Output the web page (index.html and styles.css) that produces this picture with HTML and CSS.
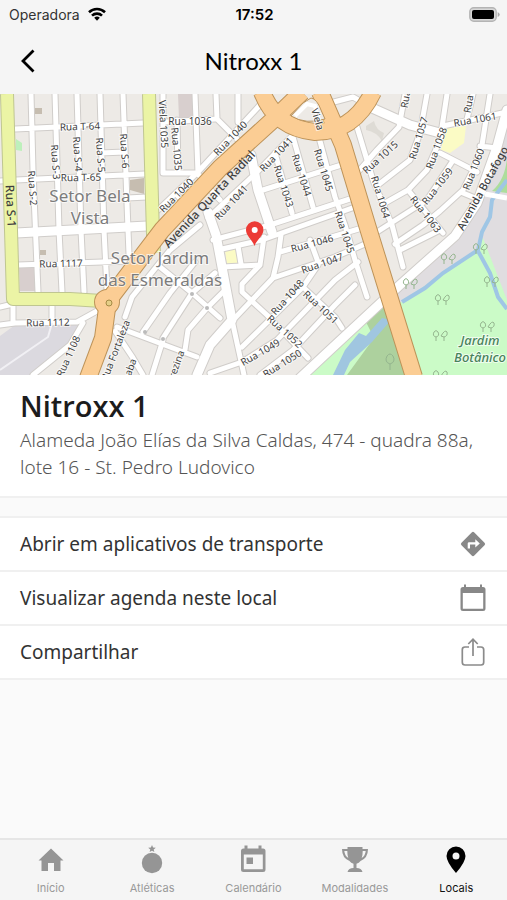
FILE: index.html
```html
<!DOCTYPE html>
<html lang="pt-BR">
<head>
<meta charset="utf-8">
<meta name="viewport" content="width=device-width, initial-scale=1">
<title>Nitroxx 1</title>
<link rel="stylesheet" href="styles.css">
</head>
<body>
<div class="app">
  <header class="top">
    <div class="status">
      <span class="carrier">Operadora
        <svg class="wifi" viewBox="0 0 18 14" aria-hidden="true"><g fill="none" stroke="#000" stroke-width="2.6"><path d="M1 5.2a11.5 11.5 0 0 1 16 0"/><path d="M4 8.6a7.2 7.2 0 0 1 10 0"/></g><path d="M6.2 10.8a4 4 0 0 1 5.6 0L9 13.8z"/></svg>
      </span>
      <span class="clock">17:52</span>
      <span class="power"><svg class="battery" viewBox="0 0 31 15" aria-hidden="true"><rect x=".8" y=".8" width="26.4" height="13.4" rx="4" fill="#d8d8d8" stroke="#b4b4b4" stroke-width="1.4"/><rect x="3" y="3" width="22" height="9" rx="2"/><path d="M28.7 5v5q2-1 2-2.5T28.7 5z" fill="#aaa"/></svg></span>
    </div>
    <nav class="navbar">
      <button class="back" type="button" aria-label="Voltar"><svg viewBox="0 0 16 24" aria-hidden="true"><path d="M13.5 1.500L3 12l10.500 10.500" fill="none" stroke="#000" stroke-width="2.800"/></svg></button>
      <div class="title">Nitroxx 1</div>
    </nav>
  </header>

  <main class="content">
    <svg class="map" viewBox="0 94 507 281" preserveAspectRatio="xMidYMid slice" role="img" aria-label="Mapa">
      <defs>
        <g id="streets">
          <path d="M31 94L33 170 38 292M55 94L59 230 62 292M77 94L81 230 84 292M100 94L104 230 107 290M123 94L128 230 130 278M15 129L143 123M0 181L16 180 145 174M100 153L125 152M127 198L147 197M18 265L130 261"/>
          <path d="M163 94V173H197M165 122L215 119M177 120L178 173M195 94L198 173M216 94L217 119 243 145M238 94V122M260 105L197 173 158 210M197 173L208 185M177 195L188 207M208 187L220 200"/>
          <path d="M208 218L257 172 293 135M275 153L292 213M293 137L313 207M317 130L335 197 345 225 355 260 367 297M263 190L335 167 345 164M213 240L270 225 353 198M222 249L262 240 355 207"/>
          <path d="M222 267L260 265M238 246L241 264M264 237L260 265 242 284V292L267 315 308 358M281 235L278 257 273 278M235 318L273 278 335 257 372 241M280 252L335 236 362 228M310 240L318 262M242 347L303 287 318 265M303 287L335 317 342 328M210 373L242 362 277 340 335 280 358 262M260 375L293 350 335 305 355 285M232 320L244 375"/>
          <path d="M392 225L403 267M400 250L440 230M405 94L399 127 377 150 357 173M427 94L420 133 410 160 378 185M447 94L440 140 427 170 408 190 385 203M443 126L507 112M473 94L467 119M490 94L482 145 473 170 463 190 440 211 423 225 395 244M452 162L427 200 377 232M440 153L477 172M357 127L373 180 392 225M408 190L443 233M480 146L497 148M463 193L480 200M372 108L353 97 330 103"/>
          <path d="M0 307L13 304V323M0 325L15 323 77 322 97 311M52 305V323M83 323L70 345 33 375M125 317L132 297 170 250 200 225M117 327L170 347 197 357M143 332L170 293 195 262M163 338L192 293 215 273M185 350L188 330 207 308 225 290M160 267L192 293 220 318M115 331L133 358 143 375M163 340L152 375"/>
        </g>
        <g id="mainroads">
          <path d="M16 233L147 226M251 155L258 190 272 232M208 212L216 235 232 320 210 345 197 375M372 108L410 125 440 133M300 378L330 350 400 285 455 236 477 203 497 147 507 110"/>
        </g>
        <g id="trees"><path d="M0 9V5M0 5Q-4 4-2 0Q0-3 2 0Q4 4 0 5M8 9V5M8 5L5 4Q9-3 11 0Q12 4 8 5"/></g>
      </defs>
      <rect class="land" y="94" width="507" height="281"/>
      <path fill="#dbd9df" d="M0 336L15 325 80 325 70 344 30 375H0z"/>
      <path fill="#e0dde0" d="M395 290L455 236 477 203 507 130V375H380z"/>
      <path fill="#cbfbc7" d="M300 375L370 308 402 302 443 273 477 252 483 238 507 300V375z"/>
      <path fill="#addd9c" d="M507 158Q505 180 492 191L507 193z"/>
      <path fill="#add19e" d="M364 318L386 298 392 320 413 375H347L374 338z"/>
      <path fill="#a0c6e0" d="M333 375L345 350 359 333 366 336 382 318 391 320 372 342 350 362 344 375z"/>
      <path fill="#fbfbc5" d="M445 128L466 126 464 143 450 153 441 150zM225 250L236 248 238 264 227 266z"/>
      <path fill="#d8cfce" d="M19 267L35 267V291H20zM178 94H194L193 118 179 119z"/>
      <path fill="#c6bdb0" d="M35 108h7v6h-7zM130 180L144 178V194L130 190zM40 250h6v5h-6z"/>
      <path fill="#bdf0bb" d="M16 139L22 143V151L16 150z"/>
      <path fill="#dedbd5" d="M366 126L374 121Q376 130 384 133L382 141Q377 132 366 130z"/>
      <path class="river" d="M507 180L492 200 490 217 482 232 478 250 443 273 425 288 402 302M478 251L490 273 498 297 507 309"/>
      <use href="#streets" class="case"/>
      <use href="#mainroads" class="case wide"/>
      <use href="#streets" class="road"/>
      <use href="#mainroads" class="road wide"/>
      <path d="M52 323L48 337 0 370" stroke="#f1f0f4" stroke-width="2" fill="none"/>
      <path d="M485 194L507 198" stroke="#fff" stroke-width="5"/>
      <g class="yellow-case"><path d="M7 94L11 230 13 299 70 299 102 301M149 94L153 235 154 253"/></g>
      <g class="yellow"><path d="M7 94L11 230 13 299 70 299 102 301M149 94L153 235 154 253"/></g>
      <g class="orange-case"><path d="M302 92L275 118 220 168 162 230 108 301 103 338 88 378M262 92Q276 128 315 132 354 132 373 92M320 92L343 145 368 228 414 377"/><circle cx="107" cy="302" r="4"/></g>
      <g class="orange"><path d="M302 92L275 118 220 168 162 230 108 301 103 338 88 378M262 92Q276 128 315 132 354 132 373 92M320 92L343 145 368 228 414 377"/><circle cx="107" cy="302" r="4"/></g>
      <path fill="#edeae6" stroke="#bd9359" d="M291 116L303 103 311 98Q317 99 321 110L325 119Q306 125 291 116z"/>
      <path d="M295 116L307 104 315 106 319 120" fill="none" stroke="#fff" stroke-width="4"/>
      <circle cx="109" cy="303" r="3" fill="#e5ce87" stroke="#a58a45"/>
      <g fill="#bbb"><circle cx="145" cy="332" r="2"/><circle cx="163" cy="339" r="2"/><circle cx="192" cy="294" r="2"/><circle cx="207" cy="308" r="2"/></g>
      <g class="trees"><use href="#trees" x="444" y="255"/><use href="#trees" x="406" y="280"/><use href="#trees" x="438" y="296"/><use href="#trees" x="487" y="278"/><use href="#trees" x="476" y="245"/><use href="#trees" x="483" y="323"/><use href="#trees" x="436" y="332"/><use href="#trees" x="436" y="372"/><path d="M390 370V364M390 364Q384 362 387 356Q390 352 393 356Q396 362 390 364"/></g>
      <g class="labels area"><text x="90" y="202">Setor Bela</text><text x="90" y="224">Vista</text><text x="160" y="264">Setor Jardim</text><text x="160" y="286">das Esmeraldas</text></g>
      <g class="labels">
        <text x="80" y="130" transform="rotate(-2 80 127)">Rua T-64</text><text x="81" y="181" transform="rotate(-1 81 177)">Rua T-65</text>
        <text transform="translate(33 188) rotate(86)">Rua S-2</text><text transform="translate(56 162) rotate(86)">Rua S-3</text><text transform="translate(78 154) rotate(86)">Rua S-4</text><text transform="translate(101 155) rotate(86)">Rua S-5</text><text transform="translate(125 151) rotate(86)">Rua S-6</text>
        <text transform="translate(164 124) rotate(87)">Viela 1035</text><text transform="translate(177 149) rotate(85)">Rua 1035</text><text x="190" y="125">Rua 1036</text>
        <text transform="translate(230 138) rotate(-46)">Rua 1040</text><text transform="translate(176 195) rotate(-45)">Rua 1040</text><text transform="translate(231 202) rotate(-47)">Rua 1041</text><text transform="translate(276 154) rotate(-46)">Rua 1041</text>
        <text transform="translate(284 186) rotate(72)">Rua 1043</text><text transform="translate(302 175) rotate(72)">Rua 1044</text><text transform="translate(324 170) rotate(73)">Rua 1045</text><text transform="translate(345 232) rotate(72)">Rua 1045</text>
        <text transform="translate(318 119) rotate(73)">Viela</text><text transform="translate(312 243) rotate(-15)">Rua 1046</text><text transform="translate(322 263) rotate(-19)">Rua 1047</text>
        <text transform="translate(287 297) rotate(-48)">Rua 1048</text><text transform="translate(260 352) rotate(-30)">Rua 1049</text><text transform="translate(282 363) rotate(-32)">Rua 1050</text><text transform="translate(321 307) rotate(43)">Rua 1051</text><text transform="translate(285 331) rotate(42)">Rua 1052</text>
        <text transform="translate(380 157) rotate(-42)">Rua 1015</text><text transform="translate(405 99) rotate(-80)">Rua</text><text transform="translate(468 104) rotate(-80)">Rua</text><text transform="translate(418 138) rotate(-73)">Rua 1057</text><text transform="translate(436 148) rotate(-70)">Rua 1058</text><text transform="translate(437 186) rotate(-52)">Rua 1059</text><text transform="translate(473 169) rotate(-69)">Rua 1060</text><text transform="translate(475 119) rotate(-10)">Rua 1061</text><text transform="translate(426 214) rotate(52)">Rua 1063</text><text transform="translate(381 197) rotate(73)">Rua 1064</text>
        <text x="61" y="267" transform="rotate(-1 61 263)">Rua 1117</text><text x="48" y="326" transform="rotate(-1 48 323)">Rua 1112</text><text transform="translate(68 356) rotate(-66)">Rua 1108</text><text transform="translate(115 350) rotate(-69)">Rua Fortaleza</text><text transform="translate(130 367) rotate(-70)">aba</text><text transform="translate(176 364) rotate(-70)">rezina</text>
      </g>
      <g class="labels major"><text transform="translate(11 206) rotate(87)">Rua S-1</text><text transform="translate(209 199) rotate(-47)">Avenida Quarta Radial</text><text class="avenue" transform="translate(482 188) rotate(-61)">Avenida Botafogo</text></g>
      <g class="labels park"><text x="480" y="345">Jardim</text><text x="480" y="362">Botânico</text></g>
      <path d="M254.500 246C252 239 246 236 246 230A8.700 8.700 0 0 1 263.400 230C263.400 236 257 239 254.500 246z" fill="#ec3b35"/><circle cx="254.700" cy="230" r="3" fill="#fff"/>
    </svg>

    <section class="place">
      <h1>Nitroxx 1</h1>
      <p>Alameda João Elías da Silva Caldas, 474 - quadra 88a, lote 16 - St. Pedro Ludovico</p>
    </section>

    <section class="actions">
      <button type="button"><span>Abrir em aplicativos de transporte</span><svg viewBox="0 0 26 28" aria-hidden="true"><path fill="#888" d="M11.700 2.500L1.500 12.700a1.800 1.800 0 0 0 0 2.600l10.200 10.200a1.800 1.800 0 0 0 2.600 0l10.200-10.200a1.800 1.800 0 0 0 0-2.600L14.300 2.500a1.800 1.800 0 0 0-2.600 0z"/><path fill="#fff" d="M15.300 9.200l4.500 4.200-4.500 4.200v-3H10v3.800H7.700v-4.800q0-1.400 1.400-1.400h6.200z"/></svg></button>
      <button type="button"><span>Visualizar agenda neste local</span><svg viewBox="0 0 26 28" aria-hidden="true"><path fill="#888" fill-rule="evenodd" d="M4 .5h2V3h14V.5h2V3h1q2.500 0 2.500 2.500v19q0 2.500-2.500 2.500H3Q.5 27 .5 24.500v-19Q.5 3 3 3h1zM2.800 9v15.700h20.400V9z"/></svg></button>
      <button type="button"><span>Compartilhar</span><svg viewBox="0 0 26 28" aria-hidden="true"><g fill="none" stroke="#8b8b8b" stroke-width="1.700"><path d="M9 9H5Q2.300 9 2.300 11.700v12.600Q2.300 27 5 27h16q2.700 0 2.700-2.700V11.700Q23.700 9 21 9h-4M13 18V1.200M8.300 6L13 1.200 17.700 6"/></g></svg></button>
    </section>
  </main>

  <nav class="tabs">
    <a href="#inicio"><svg viewBox="0 0 30 30" aria-hidden="true"><path fill="#959595" d="M15 3.500L2.500 15.500H5.500V26H12V18h6v8h6.500V15.500h3z"/></svg><span>Início</span></a>
    <a href="#atleticas"><svg viewBox="0 0 30 30" aria-hidden="true"><g fill="#959595"><circle cx="15" cy="18" r="10.200"/><path d="M15 0l1.100 2.500 2.700.2-2.100 1.800.7 2.600L15 5.700l-2.400 1.400.7-2.600-2.100-1.800 2.700-.2z"/></g></svg><span>Atléticas</span></a>
    <a href="#calendario"><svg viewBox="0 0 30 30" aria-hidden="true"><path fill="#959595" fill-rule="evenodd" d="M6.500.5h3v3h11v-3h3v3H25q2.500 0 2.500 2.500v18.500Q27.500 27 25 27H5.500Q3 27 3 24.500V6q0-2.500 2.500-2.500h1zM5.800 9.500v14.700h19V9.500zM8.500 12.500h6.500v6.500H8.500z"/></svg><span>Calendário</span></a>
    <a href="#modalidades"><svg viewBox="0 0 30 30" aria-hidden="true"><path fill="#959595" fill-rule="evenodd" d="M7.500 2h15v2H28q0 9-7.500 12-1.500 2-4 2.800v4.200q5 0 6 4H7.500q1-4 6-4v-4.200q-2.500-.8-4-2.800Q2 13 2 4h5.500zM4.300 6q.5 4.800 4 7-1-3-1-7zm18.400 0q0 4-1 7 3.500-2.200 4-7z"/></svg><span>Modalidades</span></a>
    <a class="active" href="#locais"><svg viewBox="0 0 30 30" aria-hidden="true"><path fill="#000" fill-rule="evenodd" d="M15 28Q5.500 17 5.500 11a9.500 9.500 0 0 1 19 0Q24.500 17 15 28zM15 7.500a3.500 3.500 0 1 0 0 7 3.500 3.500 0 0 0 0-7z"/></svg><span>Locais</span></a>
  </nav>
</div>
</body>
</html>
```
FILE: styles.css
```css
* { box-sizing: border-box; }
body { margin: 0; background: #fafafa; font-family: "Noto Sans", "Open Sans", sans-serif; color: #333; }
button { font: inherit; color: inherit; border: 0; background: none; padding: 0; text-align: left; }
h1, p { margin: 0; }
.app { min-height: 100vh; display: flex; flex-direction: column; }

.top { background: #f5f5f5; color: #000; }
.status { display: grid; grid-template-columns: 1fr auto 1fr; align-items: center; height: 28px; padding: 0 7px 0 9px; font: 14px "Inter", sans-serif; }
.carrier { display: flex; align-items: center; gap: 8px; color: #333; }
.wifi { width: 18px; height: 14px; }
.clock { font-size: 15px; font-weight: 600; }
.power { display: flex; justify-content: flex-end; }
.battery { width: 31px; height: 15px; }
.navbar { display: grid; grid-template-columns: 48px 1fr 48px; align-items: center; height: 66px; }
.back { display: flex; padding-left: 20px; }
.back svg { width: 16px; height: 24px; }
.title { text-align: center; font: 400 24px/28px "Lato", sans-serif; }

.content { flex: 1; }
.map { display: block; width: 100%; height: 281px; }
.land { fill: #edeae6; }
.case, .road { fill: none; stroke-linejoin: round; stroke-linecap: round; }
.case { stroke: #d0cdca; stroke-width: 7px; }
.road { stroke: #fff; stroke-width: 5px; }
.case.wide { stroke-width: 11px; }
.road.wide { stroke-width: 9px; }
.yellow, .yellow-case, .orange, .orange-case { fill: none; stroke-linejoin: round; }
.yellow { stroke: #ebf4a5; stroke-width: 12px; }
.yellow-case { stroke: #bfc691; stroke-width: 14px; }
.orange { stroke: #fbcd94; stroke-width: 16px; }
.orange-case { stroke: #bd9359; stroke-width: 18px; }
.river { fill: none; stroke: #9fc6e5; stroke-width: 4px; }
.trees { fill: none; stroke: #94b58e; stroke-width: 1px; }
.labels { font: 10px "Noto Sans", sans-serif; fill: #3f3f3f; text-anchor: middle; dominant-baseline: auto; paint-order: stroke; stroke: #ffffffb0; stroke-width: 2px; }
.labels text:not([y]) { dominant-baseline: central; }
.labels.major { font-size: 12px; font-weight: 500; stroke-width: 0; }
.labels .avenue { font-size: 11px; }
.labels.area { font-size: 17px; fill: #7c7c7c; }
.labels.park { font-size: 13px; font-weight: 500; font-style: italic; fill: #48825b; }

.place { background: #fff; padding: 12px 20px 15px; border-bottom: 2px solid #f0f0f0; }
.place h1 { font: 600 29px/38px "Open Sans", sans-serif; color: #1c1c1c; }
.place p { margin-top: 2px; font-size: 19px; line-height: 27px; font-weight: 300; color: #555; }
.actions { display: flex; flex-direction: column; margin-top: 18px; background: #fff; border-top: 2px solid #f0f0f0; }
.actions button { display: flex; align-items: center; justify-content: space-between; height: 54px; padding: 0 21px 0 20px; border-bottom: 2px solid #f0f0f0; font-size: 19px; }
.actions svg { width: 26px; height: 28px; }

.tabs { display: grid; grid-template-columns: repeat(5, 1fr); height: 62px; padding-top: 5px; background: #f5f5f5; border-top: 2px solid #e6e6e6; }
.tabs a { display: flex; flex-direction: column; align-items: center; gap: 6px; font: 11px/15px "Inter", sans-serif; color: #999; text-decoration: none; }
.tabs svg { width: 30px; height: 30px; }
.tabs .active { color: #111; }
```
